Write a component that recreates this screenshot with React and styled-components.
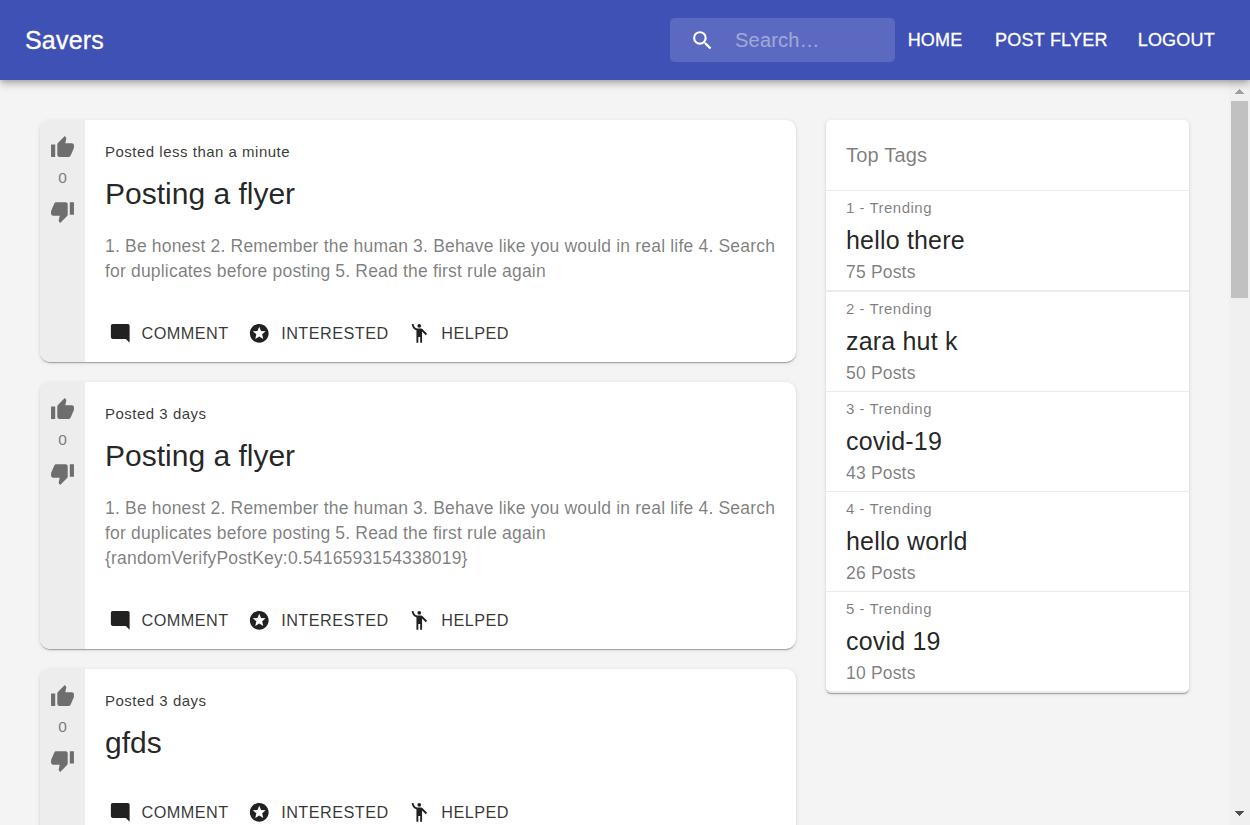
import React from "react";
import styled, { createGlobalStyle } from "styled-components";
import {
  MdThumbUp,
  MdThumbDown,
  MdModeComment,
  MdStars,
  MdEmojiPeople,
  MdSearch,
} from "react-icons/md";

const GlobalStyle = createGlobalStyle`
  *, *::before, *::after { box-sizing: border-box; }
  body {
    margin: 0;
    overflow: hidden;
    background: #f4f4f4;
    color: rgba(0, 0, 0, 0.87);
    font-family: "Liberation Sans", Arial, sans-serif;
  }
`;

const Page = styled.div`
  display: flex;
  flex-direction: column;
  height: 825px;
  overflow: hidden;
`;

const AppBar = styled.header`
  position: relative;
  z-index: 1;
  flex: none;
  display: flex;
  align-items: center;
  height: 80px;
  padding: 0 25px;
  color: #fff;
  background: #3f51b5;
  box-shadow: 0 2.5px 5px -1.25px rgba(0, 0, 0, 0.2),
    0 5px 6.25px 0 rgba(0, 0, 0, 0.14), 0 1.25px 12.5px 0 rgba(0, 0, 0, 0.12);
`;

const Brand = styled.h1`
  flex: 1;
  margin: 0;
  font-size: 25px;
  font-weight: 400;
  line-height: 40px;
  letter-spacing: 0.0075em;
  -webkit-text-stroke: 0.3px currentColor;
`;

const SearchBox = styled.label`
  display: flex;
  align-items: center;
  width: 225px;
  height: 44px;
  padding-left: 20px;
  border-radius: 5px;
  background: rgba(255, 255, 255, 0.15);

  svg {
    flex: none;
    width: 25px;
    height: 25px;
  }
`;

const SearchInput = styled.input`
  width: 150px;
  margin-left: 20px;
  padding: 0;
  border: 0;
  outline: 0;
  background: none;
  color: #fff;
  font: 400 20px "Liberation Sans", Arial, sans-serif;
  letter-spacing: 0.00938em;

  &::placeholder {
    color: #fff;
    opacity: 0.42;
  }
`;

const Nav = styled.nav`
  display: flex;
  gap: 10px;
`;

const NavButton = styled.button`
  min-width: 80px;
  padding: 7px 10px;
  border: 0;
  background: none;
  color: #fff;
  font: 400 18px/31px "Liberation Sans", Arial, sans-serif;
  letter-spacing: 0.22px;
  text-transform: uppercase;
  white-space: nowrap;
  -webkit-text-stroke: 0.3px currentColor;
`;

const Body = styled.div`
  flex: 1;
  min-height: 0;
  display: flex;
`;

const Content = styled.main`
  flex: 1;
  display: flex;
  align-items: flex-start;
  gap: 30px;
  padding: 40px 40px 0;
  overflow: hidden;
`;

const Feed = styled.section`
  flex: none;
  width: 756px;
  display: flex;
  flex-direction: column;
  gap: 20px;
`;

const Paper = styled.article`
  overflow: hidden;
  background: #fff;
  border-radius: ${(p) => p.$radius}px;
  box-shadow: 0 2px 1px -1px rgba(0, 0, 0, 0.14),
    0 1px 1px 0 rgba(0, 0, 0, 0.18), 0 1px 4px 0 rgba(0, 0, 0, 0.12);
`;

const PostCard = styled(Paper)`
  display: flex;
`;

const Votes = styled.div`
  flex: none;
  display: flex;
  flex-direction: column;
  align-items: center;
  width: 45px;
  padding-top: 15px;
  background: #ededed;
  color: #6e6e6e;

  svg {
    width: 25px;
    height: 25px;
  }
`;

const VoteCount = styled.span`
  height: 39px;
  color: #7c7c7c;
  font-size: 15.5px;
  line-height: 36px;
`;

const PostMain = styled.div`
  flex: 1;
  padding: 19px 20px 10px;
`;

const Posted = styled.div`
  color: rgba(0, 0, 0, 0.8);
  font-size: 15px;
  line-height: 25px;
  letter-spacing: 0.5px;
`;

const Title = styled.h2`
  margin: 10px 0 0;
  font-size: 30px;
  font-weight: 400;
  line-height: 40px;
`;

const Text = styled.p`
  margin: 20px 0 0;
  color: rgba(0, 0, 0, 0.52);
  font-size: 17.5px;
  line-height: 25px;
  letter-spacing: 0.01071em;
`;

const Actions = styled.div`
  display: flex;
  gap: 19.5px;
  margin-top: 30px;
  padding-left: 3.5px;
`;

const Action = styled.button`
  display: flex;
  align-items: center;
  gap: 10.5px;
  height: 38px;
  padding: 0;
  border: 0;
  background: none;
  color: rgba(0, 0, 0, 0.8);
  font: 400 16.25px/20px "Liberation Sans", Arial, sans-serif;
  letter-spacing: 0.46px;
  text-transform: uppercase;

  svg {
    width: 22.5px;
    height: 22.5px;
    color: #212121;
  }
`;

const TagsCard = styled(Paper)`
  flex: 1;
  border-bottom: 2px solid #ebebeb;
`;

const TagsHeader = styled.h3`
  height: 70px;
  margin: 0;
  padding: 0 20px;
  color: rgba(0, 0, 0, 0.52);
  font-size: 20px;
  font-weight: 400;
  line-height: 70px;
  letter-spacing: 0.00938em;
`;

const Tag = styled.div`
  padding: 4px 20px 6px;
  border-top: ${(p) => (p.$thick ? 2 : 1)}px solid #ebebeb;
  color: rgba(0, 0, 0, 0.52);
`;

const TagRank = styled.div`
  font-size: 15px;
  line-height: 25px;
  letter-spacing: 0.5px;
`;

const TagName = styled.div`
  color: rgba(0, 0, 0, 0.87);
  font-size: 25px;
  line-height: 40px;
  letter-spacing: 0.0075em;
`;

const TagCount = styled.div`
  margin-top: 1px;
  font-size: 17.5px;
  line-height: 23px;
  letter-spacing: 0.01071em;
`;

const ScrollTrack = styled.div`
  flex: none;
  display: flex;
  flex-direction: column;
  align-items: center;
  width: 21px;
  padding: 9px 0 9px;
  background: #f0f0f0;
`;

const ScrollThumb = styled.div`
  width: 17px;
  height: 197px;
  margin: 7px 0 auto;
  background: #c1c1c1;
`;

const posts = [
  {
    posted: "Posted less than a minute",
    title: "Posting a flyer",
    text: "1. Be honest 2. Remember the human 3. Behave like you would in real life 4. Search for duplicates before posting 5. Read the first rule again",
  },
  {
    posted: "Posted 3 days",
    title: "Posting a flyer",
    text: "1. Be honest 2. Remember the human 3. Behave like you would in real life 4. Search for duplicates before posting 5. Read the first rule again {randomVerifyPostKey:0.5416593154338019}",
  },
  { posted: "Posted 3 days", title: "gfds" },
];

const tags = [
  ["hello there", 75],
  ["zara hut k", 50],
  ["covid-19", 43],
  ["hello world", 26],
  ["covid 19", 10],
];

function Post({ posted, title, text }) {
  return (
    <PostCard $radius={10}>
      <Votes>
        <MdThumbUp />
        <VoteCount>0</VoteCount>
        <MdThumbDown />
      </Votes>
      <PostMain>
        <Posted>{posted}</Posted>
        <Title>{title}</Title>
        {text && <Text>{text}</Text>}
        <Actions>
          <Action>
            <MdModeComment />
            Comment
          </Action>
          <Action>
            <MdStars />
            Interested
          </Action>
          <Action>
            <MdEmojiPeople />
            Helped
          </Action>
        </Actions>
      </PostMain>
    </PostCard>
  );
}

export default function App() {
  return (
    <Page>
      <GlobalStyle />
      <AppBar>
        <Brand>Savers</Brand>
        <SearchBox>
          <MdSearch />
          <SearchInput placeholder="Search…" />
        </SearchBox>
        <Nav>
          <NavButton>Home</NavButton>
          <NavButton>Post Flyer</NavButton>
          <NavButton>Logout</NavButton>
        </Nav>
      </AppBar>
      <Body>
        <Content>
          <Feed>
            {posts.map((post, i) => (
              <Post key={i} {...post} />
            ))}
          </Feed>
          <TagsCard as="aside" $radius={5}>
            <TagsHeader>Top Tags</TagsHeader>
            {tags.map(([name, count], i) => (
              <Tag key={name} $thick={i === 1}>
                <TagRank>{i + 1} - Trending</TagRank>
                <TagName>{name}</TagName>
                <TagCount>{count} Posts</TagCount>
              </Tag>
            ))}
          </TagsCard>
        </Content>
        <ScrollTrack>
          <svg width="9" height="5" viewBox="0 0 9 5" shapeRendering="crispEdges">
            <path d="M4.5 0L9 5H0z" fill="#a0a0a0" />
          </svg>
          <ScrollThumb />
          <svg width="9" height="5" viewBox="0 0 9 5" shapeRendering="crispEdges">
            <path d="M0 0H9L4.5 5z" fill="#505050" />
          </svg>
        </ScrollTrack>
      </Body>
    </Page>
  );
}
